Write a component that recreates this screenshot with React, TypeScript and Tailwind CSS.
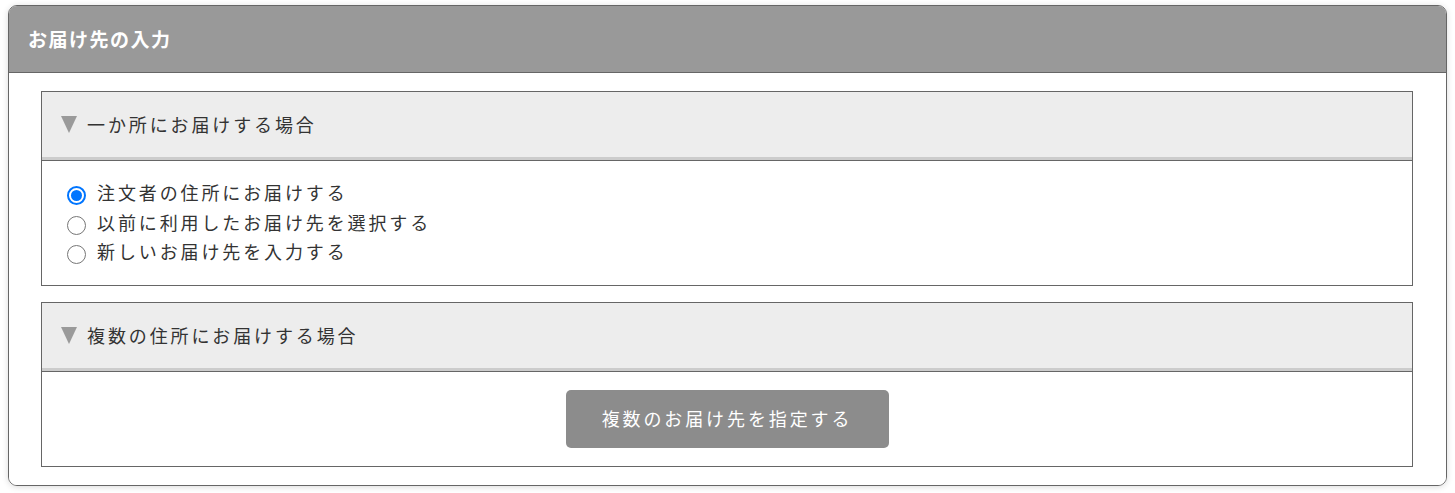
import React from "react";

const FONT = '"Noto Sans CJK JP", "Noto Sans", sans-serif';

function Triangle() {
  return (
    <svg width="16" height="17" viewBox="0 0 16 17" className="shrink-0">
      <polygon points="0,0 16,0 8,17" fill="#9a9a9a" />
    </svg>
  );
}

function Radio({ checked }: { checked?: boolean }) {
  if (checked) {
    return (
      <span className="w-[19px] h-[19px] rounded-full border-2 border-[#0075ff] bg-white flex items-center justify-center shrink-0 translate-y-[3px]">
        <span className="w-[11px] h-[11px] rounded-full bg-[#0075ff]" />
      </span>
    );
  }
  return (
    <span className="w-[19px] h-[19px] rounded-full border-[1.5px] border-[#767676] bg-white shrink-0 translate-y-[3px]" />
  );
}

function SectionHeader({ title }: { title: string }) {
  return (
    <div className="h-[68px] bg-[#ededed] border-b-[3px] border-[#cccccc] flex items-center pl-[19px] gap-[10px]">
      <Triangle />
      <span className="text-[18px] tracking-[0.16em] text-[#333]">{title}</span>
    </div>
  );
}

export default function App() {
  const options = [
    { label: "注文者の住所にお届けする", checked: true },
    { label: "以前に利用したお届け先を選択する", checked: false },
    { label: "新しいお届け先を入力する", checked: false },
  ];
  return (
    <div className="bg-white pt-[5px] px-2 pb-2" style={{ fontFamily: FONT }}>
      <div className="rounded-[9px] border border-[#666] overflow-hidden shadow-[0_1px_6px_rgba(0,0,0,0.15)]">
        <div className="h-[67px] bg-[#999999] border-b border-[#666] flex items-center pl-[19px] text-white font-bold text-[19px] tracking-[0.08em]">
          お届け先の入力
        </div>
        <div className="bg-white pl-8 pr-[33px] pt-[18px] pb-[18px] flex flex-col gap-4">
          <div className="border border-[#666]">
            <SectionHeader title="一か所にお届けする場合" />
            <div className="border-t border-[#666] pt-[17px] pb-[18px] pl-[25px] flex flex-col">
              {options.map((o) => (
                <label key={o.label} className="h-[29.5px] flex items-center gap-[11px]">
                  <Radio checked={o.checked} />
                  <span className="text-[18px] tracking-[0.16em] text-[#333] leading-[29.5px]">{o.label}</span>
                </label>
              ))}
            </div>
          </div>
          <div className="border border-[#666]">
            <SectionHeader title="複数の住所にお届けする場合" />
            <div className="border-t border-[#666] py-[18px] flex justify-center">
              <button className="w-[323px] h-[58px] rounded-[5px] bg-[#8c8c8c] text-white text-[18px] tracking-[0.16em] flex items-center justify-center">
                複数のお届け先を指定する
              </button>
            </div>
          </div>
        </div>
      </div>
    </div>
  );
}
